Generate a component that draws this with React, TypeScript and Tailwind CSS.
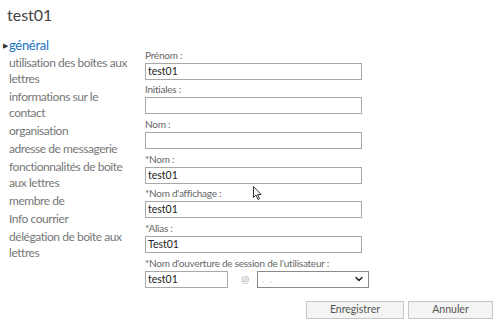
import { ChevronDown } from "lucide-react";

const navItems = [
  "utilisation des boîtes aux lettres",
  "informations sur le contact",
  "organisation",
  "adresse de messagerie",
  "fonctionnalités de boîte aux lettres",
  "membre de",
  "Info courrier",
  "délégation de boîte aux lettres",
];

const fields = [
  { label: "Prénom :", value: "test01" },
  { label: "Initiales :", value: "" },
  { label: "Nom :", value: "" },
  { label: "*Nom :", value: "test01" },
  { label: "*Nom d'affichage :", value: "test01" },
  { label: "*Alias :", value: "Test01" },
];

function Field({ label, children }: { label: string; children: React.ReactNode }) {
  return (
    <div className="flex flex-col h-[34.67px] justify-end">
      <div className="text-[10px] leading-[14px] tracking-[-0.25px] text-[#666] mb-[1px]">{label}</div>
      {children}
    </div>
  );
}

export default function App() {
  return (
    <div
      className="relative w-[497px] h-[327px] bg-white overflow-hidden"
      style={{ fontFamily: 'Lato, "Open Sans", sans-serif' }}
    >
      <div className="pl-[7px] pt-[5px] text-[16px] leading-[20px] text-[#444]">test01</div>

      <div className="flex mt-[11px]">
        <nav className="w-[139px] shrink-0 pl-[3px] pr-[4px] text-[12px] leading-[16px] tracking-[-0.45px] text-[#777]">
          <div className="flex items-center h-[18px]">
            <span className="text-[7px] text-[#333] w-[6px] leading-none">▶</span>
            <span className="text-[#1a73c6] text-[13px] tracking-[-0.3px]">général</span>
          </div>
          {navItems.map((item) => (
            <div key={item} className="pl-[6px] py-[1px]">
              {item}
            </div>
          ))}
        </nav>

        <div className="flex-1 pl-[6px] mt-[9px]">
          {fields.map((f) => (
            <Field key={f.label} label={f.label}>
              <div className="w-[217px] h-[17px] border border-[#a8a8a8] px-[2px] text-[10.5px] leading-[15px] text-[#222]">
                {f.value}
              </div>
            </Field>
          ))}
          <Field label="*Nom d'ouverture de session de l'utilisateur :">
            <div className="flex items-center">
              <div className="w-[83px] h-[17px] border border-[#a8a8a8] px-[2px] text-[10.5px] leading-[15px] text-[#222]">
                test01
              </div>
              <span className="ml-[13px] w-[16px] text-[10px] text-[#aaa]">@</span>
              <div className="w-[112px] h-[17px] border border-[#8a8a8a] flex items-center justify-between pl-[4px] pr-[3px]">
                <span className="text-[8px] leading-none text-[#bbb] tracking-[2px]">. ,</span>
                <ChevronDown size={12} strokeWidth={3} className="text-[#222]" />
              </div>
            </div>
          </Field>
          <div className="flex justify-end gap-[4px] mt-[13px] pr-[4px]">
            <button className="w-[98px] h-[18px] bg-[#f4f4f4] border border-[#c6c6c6] text-[10.5px] text-[#555] leading-none">
              Enregistrer
            </button>
            <button className="w-[85px] h-[18px] bg-[#f4f4f4] border border-[#c6c6c6] text-[10.5px] text-[#555] leading-none">
              Annuler
            </button>
          </div>
        </div>
      </div>

      <svg className="absolute left-[253px] top-[186px]" width="10" height="15" viewBox="0 0 10 15">
        <path d="M0.5 0.5 L0.5 11.5 L3 9 L5 13.5 L6.5 12.8 L4.6 8.5 L8 8.5 Z" fill="white" stroke="#333" strokeWidth="1" />
      </svg>
    </div>
  );
}
